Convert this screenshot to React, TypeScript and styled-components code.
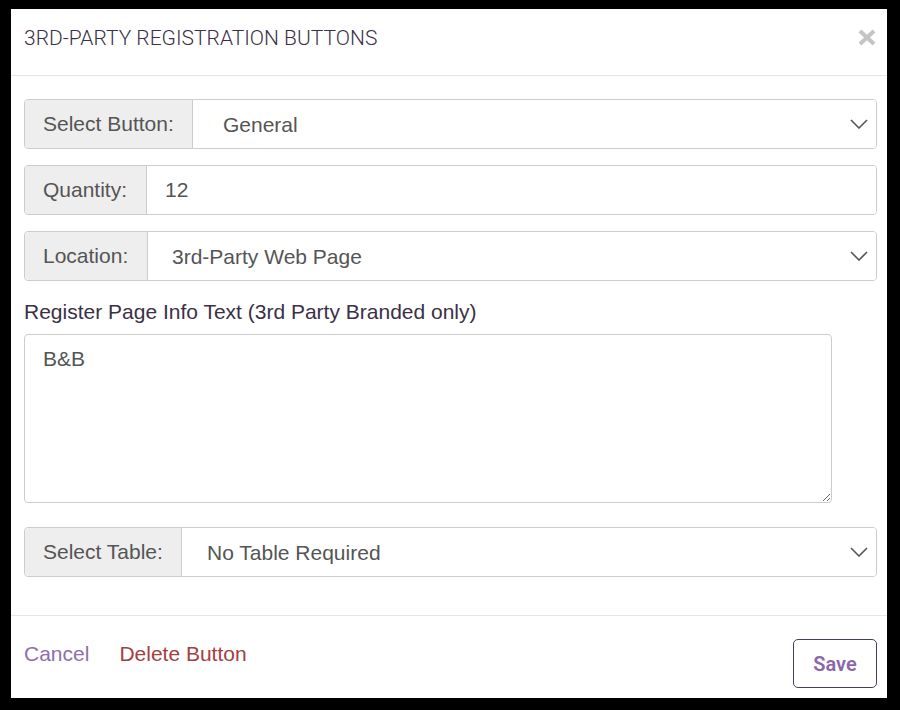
import React from "react";
import styled, { createGlobalStyle } from "styled-components";

const Global = createGlobalStyle`
  html, body { margin: 0; padding: 0; background: #000; }
  body { font-family: "Liberation Sans", Arial, sans-serif; }
  * { box-sizing: border-box; }
`;

const Page = styled.div`
  width: 900px;
  height: 710px;
  background: #000;
  padding: 9px 13px 12px 11px;
`;

const Modal = styled.div`
  width: 876px;
  height: 689px;
  background: #fff;
  display: flex;
  flex-direction: column;
`;

const Header = styled.div`
  height: 67px;
  border-bottom: 1px solid #e5e5e5;
  display: flex;
  align-items: center;
  justify-content: space-between;
  padding: 0 11px 0 13px;
`;

const Title = styled.h4`
  margin: 0;
  font-family: Roboto, "Liberation Sans", sans-serif;
  font-weight: 300;
  font-size: 21px;
  color: #3b3046;
  letter-spacing: 0;
  margin-top: -8px;
`;

const Close = styled.button`
  border: 0;
  background: none;
  padding: 0;
  width: 18px;
  height: 17px;
  margin-top: -9px;
  display: flex;
  cursor: pointer;
`;

const Body = styled.div`
  padding: 23px 10px 0 13px;
  display: flex;
  flex-direction: column;
  flex: 1;
  border-bottom: 1px solid #e5e5e5;
`;

const Group = styled.div<{ $mb?: number }>`
  display: flex;
  height: 50px;
  border: 1px solid #ccc;
  border-radius: 4px;
  overflow: hidden;
  margin-bottom: ${(p) => p.$mb ?? 16}px;
`;

const Addon = styled.div<{ $w: number }>`
  width: ${(p) => p.$w}px;
  flex: none;
  background: #eee;
  border-right: 1px solid #ccc;
  display: flex;
  align-items: center;
  padding-left: 18px;
  font-size: 21px;
  color: #555;
`;

const Field = styled.div<{ $pl: number }>`
  flex: 1;
  display: flex;
  align-items: center;
  padding: 0 8px 0 ${(p) => p.$pl}px;
  background: #fff;
`;

const Select = styled.select`
  flex: 1;
  appearance: none;
  border: 0;
  background: transparent;
  font-family: "Liberation Sans", Arial, sans-serif;
  font-size: 21px;
  line-height: 24px;
  color: #555;
  padding: 1px 0 0;
  outline: none;
`;

const Input = styled.input`
  flex: 1;
  border: 0;
  font-family: "Liberation Sans", Arial, sans-serif;
  font-size: 21px;
  color: #555;
  padding: 0;
  outline: none;
`;

const Label = styled.label`
  font-size: 21px;
  color: #3b3046;
  line-height: 24px;
  margin: 3px 0 10px;
`;

const TextArea = styled.textarea`
  width: 808px;
  height: 169px;
  border: 1px solid #ccc;
  border-radius: 4px;
  padding: 12px 18px;
  font-family: "Liberation Sans", Arial, sans-serif;
  font-size: 21px;
  color: #555;
  margin-bottom: 24px;
  outline: none;
`;

const Footer = styled.div`
  height: 82px;
  display: flex;
  align-items: flex-start;
  padding: 23px 10px 0 13px;
`;

const LinkBtn = styled.a<{ $color: string }>`
  font-size: 21px;
  line-height: 24px;
  margin-top: 3px;
  margin-right: 30px;
  color: ${(p) => p.$color};
  text-decoration: none;
  cursor: pointer;
`;

const SaveBtn = styled.button`
  margin-left: auto;
  width: 84px;
  height: 49px;
  border: 1px solid #4d3d5c;
  border-radius: 5px;
  background: #fff;
  font-family: Roboto, "Liberation Sans", sans-serif;
  font-weight: 600;
  font-size: 20px;
  color: #8a68a8;
  padding: 0;
  cursor: pointer;
`;

const Chevron = () => (
  <svg width="18" height="10" viewBox="0 0 18 10" fill="none">
    <path d="M1 1 L9 9 L17 1" stroke="#555" strokeWidth="1.6" />
  </svg>
);

const SelectField = ({ pl, value }: { pl: number; value: string }) => (
  <Field $pl={pl}>
    <Select defaultValue={value}>
      <option>{value}</option>
    </Select>
    <Chevron />
  </Field>
);

export default function App() {
  return (
    <>
      <Global />
      <Page>
        <Modal>
          <Header>
            <Title>3RD-PARTY REGISTRATION BUTTONS</Title>
            <Close aria-label="Close">
              <svg width="18" height="17" viewBox="0 0 18 17">
                <path d="M2 2 L16 15 M16 2 L2 15" stroke="#c4c4c4" strokeWidth="4" />
              </svg>
            </Close>
          </Header>
          <Body>
            <Group>
              <Addon $w={168}>Select Button:</Addon>
              <SelectField pl={30} value="General" />
            </Group>
            <Group>
              <Addon $w={122}>Quantity:</Addon>
              <Field $pl={18}>
                <Input defaultValue="12" />
              </Field>
            </Group>
            <Group>
              <Addon $w={123}>Location:</Addon>
              <SelectField pl={24} value="3rd-Party Web Page" />
            </Group>
            <Label>Register Page Info Text (3rd Party Branded only)</Label>
            <TextArea defaultValue="B&B" />
            <Group $mb={0}>
              <Addon $w={157}>Select Table:</Addon>
              <SelectField pl={25} value="No Table Required" />
            </Group>
          </Body>
          <Footer>
            <LinkBtn $color="#8e6fae">Cancel</LinkBtn>
            <LinkBtn $color="#a4403f">Delete Button</LinkBtn>
            <SaveBtn>Save</SaveBtn>
          </Footer>
        </Modal>
      </Page>
    </>
  );
}
